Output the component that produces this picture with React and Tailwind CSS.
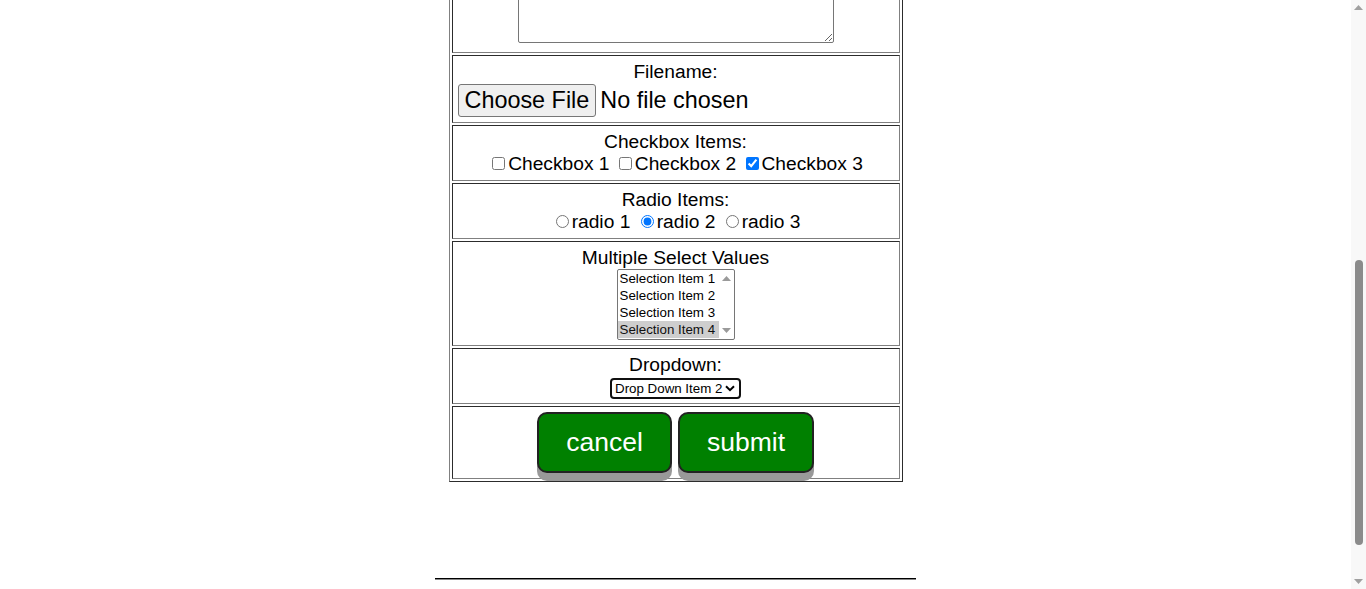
import React, { useState } from "react";

const cell = "[border:1px_inset_grey] p-[5px] text-center";

function Chevron() {
  return (
    <svg width="10" height="7" viewBox="0 0 10 7" className="shrink-0">
      <path d="M1 1.2 L5 5.2 L9 1.2" fill="none" stroke="#000" strokeWidth="2" />
    </svg>
  );
}

function Triangle({ up, color = "#9a9a9a", w = 9, h = 5 }) {
  return (
    <svg width={w} height={h} viewBox="0 0 8 4" preserveAspectRatio="none">
      <path d={up ? "M0 4 L4 0 L8 4 Z" : "M0 0 L8 0 L4 4 Z"} fill={color} />
    </svg>
  );
}

export default function App() {
  const [checks, setChecks] = useState([false, false, true]);
  const [radio, setRadio] = useState(2);
  const [picked, setPicked] = useState([4]);
  const selections = [1, 2, 3, 4];

  return (
    <div className="flex h-[589px] overflow-hidden bg-white font-['Liberation_Sans',Arial,sans-serif] leading-[normal] text-black">
      <div className="flex-1 overflow-hidden">
        <table className="mx-auto -mt-[46px] w-[454px] border-separate border-spacing-[2px] [border:1px_outset_grey] text-[19.2px]">
          <tbody>
            <tr>
              <td className={cell}>
                <textarea className="mx-auto mb-[4px] block h-[80px] w-[316px] rounded-[2px] border border-[#767676] text-[13.333px]" />
              </td>
            </tr>
            <tr>
              <td className={cell}>
                Filename:
                <input
                  type="file"
                  className="block w-full pt-[1px] text-left text-[23.4px] file:mr-[4px] file:h-[33px] file:rounded-[3px] file:border file:border-solid file:border-[#767676] file:bg-[#efefef] file:px-[6px] file:text-black"
                />
              </td>
            </tr>
            <tr>
              <td className={cell}>
                Checkbox Items:
                <br />
                {checks.map((c, i) => (
                  <React.Fragment key={i}>
                    <label>
                      <input
                        type="checkbox"
                        checked={c}
                        onChange={() => setChecks(checks.map((v, j) => (j === i ? !v : v)))}
                        className="mt-[3px] mr-[3px] mb-[3px] ml-[4px]"
                      />
                      Checkbox {i + 1}
                    </label>{" "}
                  </React.Fragment>
                ))}
              </td>
            </tr>
            <tr>
              <td className={cell}>
                Radio Items:
                <br />
                {[1, 2, 3].map((r) => (
                  <React.Fragment key={r}>
                    <label>
                      <input
                        type="radio"
                        name="radio"
                        checked={radio === r}
                        onChange={() => setRadio(r)}
                        className="mt-[3px] mr-[3px] ml-[5px]"
                      />
                      radio {r}
                    </label>{" "}
                  </React.Fragment>
                ))}
              </td>
            </tr>
            <tr>
              <td className={cell}>
                Multiple Select Values
                <div
                  role="listbox"
                  aria-multiselectable="true"
                  className="mx-auto flex h-[71px] w-[118px] rounded-[2px] border border-[#767676] text-left text-[13.333px]"
                >
                  <div className="flex-1">
                    {selections.map((s) => (
                      <div
                        key={s}
                        role="option"
                        aria-selected={picked.includes(s)}
                        onClick={() =>
                          setPicked(picked.includes(s) ? picked.filter((p) => p !== s) : [...picked, s])
                        }
                        className={`h-[17px] px-[2px] leading-[17px] ${picked.includes(s) ? "bg-[#cecece] text-[#101010]" : ""}`}
                      >
                        Selection Item {s}
                      </div>
                    ))}
                  </div>
                  <div className="flex w-[15px] flex-col items-center justify-between py-[6px]">
                    <Triangle up />
                    <Triangle />
                  </div>
                </div>
              </td>
            </tr>
            <tr>
              <td className={cell}>
                Dropdown:
                <div className="mx-auto mt-[2px] -mb-[1px] flex h-[21px] w-[131px] items-center justify-between rounded-[4px] border-2 border-[#101010] pr-[4px] pl-[3px] text-[13.333px]">
                  <span>Drop Down Item 2</span>
                  <Chevron />
                </div>
              </td>
            </tr>
            <tr>
              <td className={cell}>
                <div className="flex justify-center gap-[6px]">
                  <button className="h-[61px] w-[135px] rounded-[10px] border-2 border-[#222] bg-[#008000] text-[26.5px] text-white shadow-[0_8px_0_#999]">
                    cancel
                  </button>
                  <button className="h-[61px] w-[136px] rounded-[10px] border-2 border-[#222] bg-[#008000] text-[26.5px] text-white shadow-[0_8px_0_#999]">
                    submit
                  </button>
                </div>
              </td>
            </tr>
          </tbody>
        </table>
        <hr className="mx-auto mt-[96px] w-[481px] border-t border-b border-t-black border-b-[#888]" />
      </div>
      {/* page scrollbar */}
      <div className="flex w-[15px] flex-col items-center justify-between bg-[#f8f8f8] py-[5px]">
        <Triangle up color="#a0a0a0" w={9} h={5} />
        <div className="flex w-full flex-1 flex-col items-center pt-[250px] pb-[34px]">
          <div className="w-[8px] flex-1 rounded-full bg-[#8b8b8b]" />
        </div>
        <Triangle color="#a0a0a0" w={9} h={5} />
      </div>
    </div>
  );
}
